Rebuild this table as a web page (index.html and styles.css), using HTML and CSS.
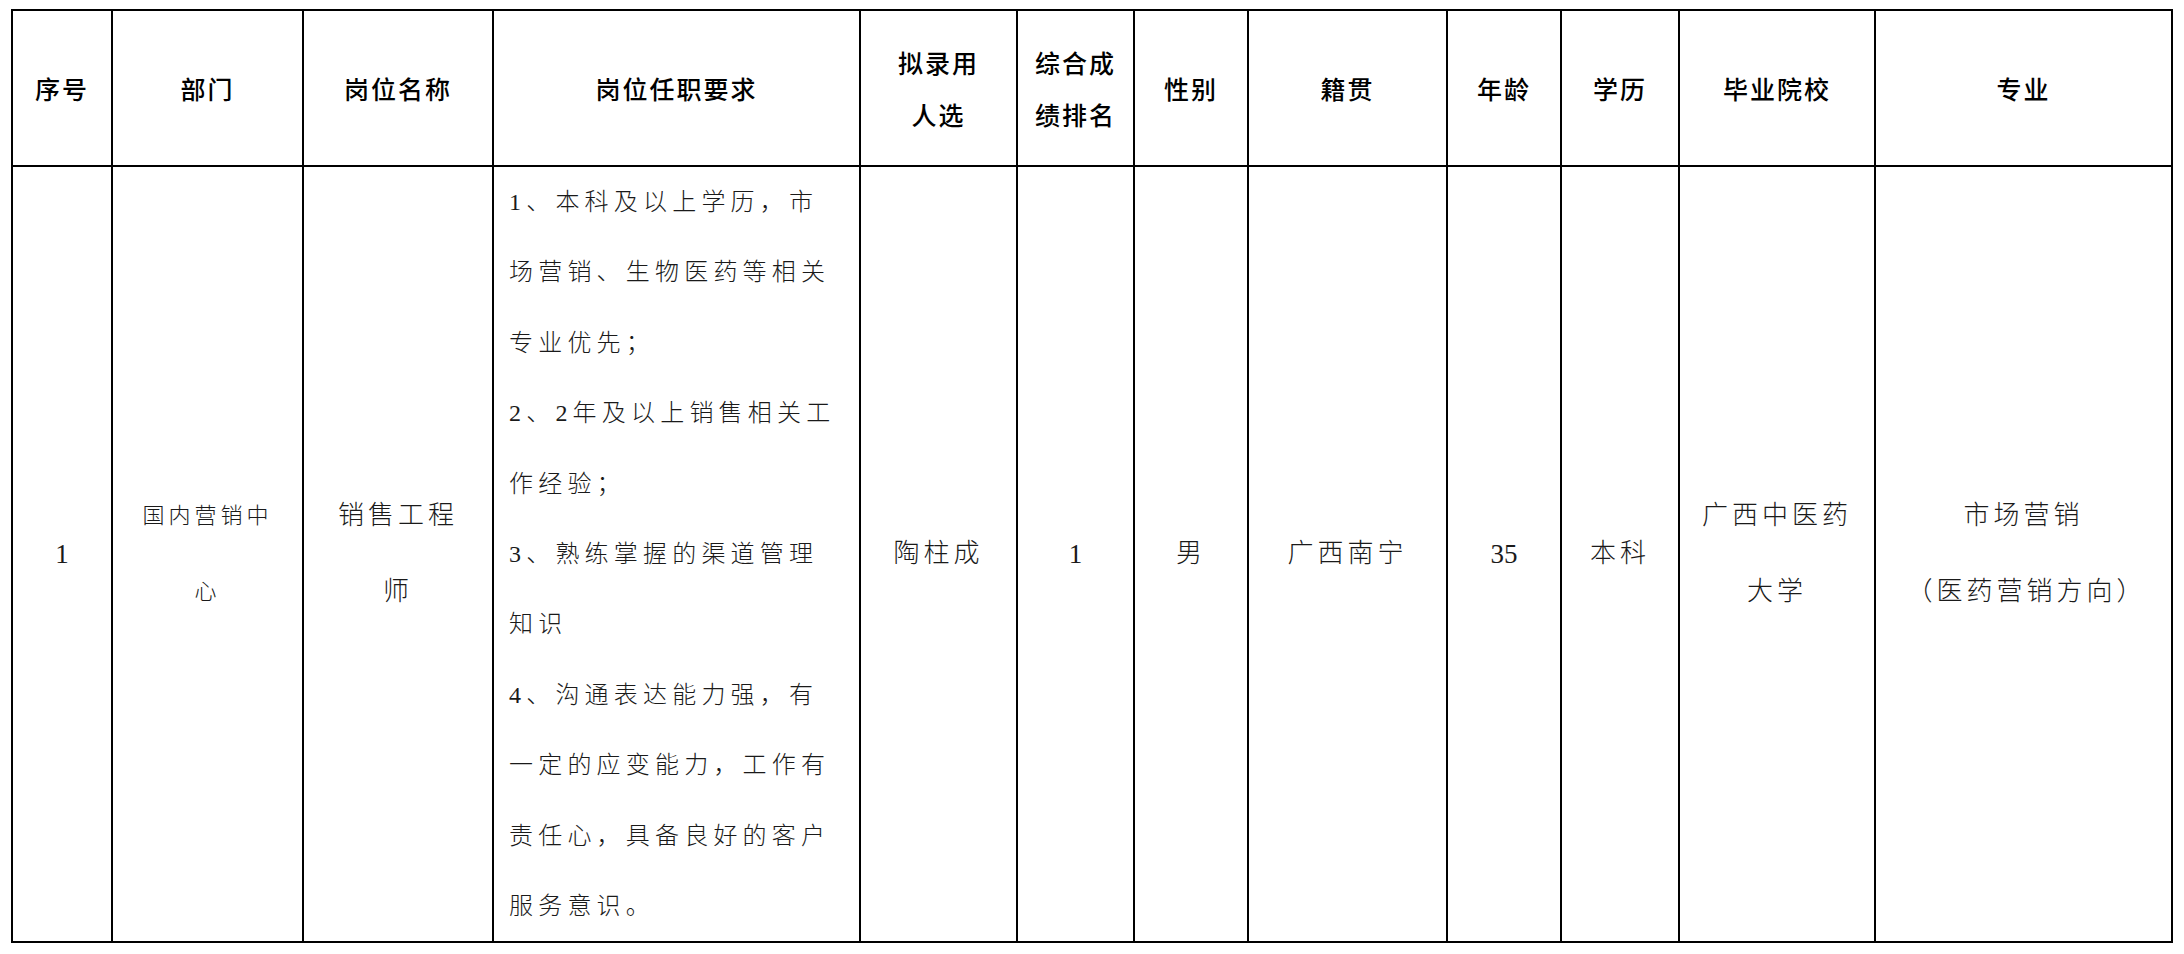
FILE: index.html
```html
<!DOCTYPE html>
<html lang="zh-CN">
<head>
<meta charset="utf-8">
<title>拟录用人选</title>
<link rel="stylesheet" href="styles.css">
</head>
<body>
<table class="grid">
  <colgroup>
    <col class="c1"><col class="c2"><col class="c3"><col class="c4"><col class="c5"><col class="c6">
    <col class="c7"><col class="c8"><col class="c9"><col class="c10"><col class="c11"><col class="c12">
  </colgroup>
  <thead>
    <tr class="head">
      <th>序号</th>
      <th>部门</th>
      <th>岗位名称</th>
      <th>岗位任职要求</th>
      <th class="two">拟录用<br>人选</th>
      <th class="two">综合成<br>绩排名</th>
      <th>性别</th>
      <th>籍贯</th>
      <th>年龄</th>
      <th>学历</th>
      <th>毕业院校</th>
      <th>专业</th>
    </tr>
  </thead>
  <tbody>
    <tr class="row">
      <td class="num">1</td>
      <td class="small two">国内营销中<br>心</td>
      <td class="two">销售工程<br>师</td>
      <td class="req">1、本科及以上学历，市<br>场营销、生物医药等相关<br>专业优先；<br>2、2年及以上销售相关工<br>作经验；<br>3、熟练掌握的渠道管理<br>知识<br>4、沟通表达能力强，有<br>一定的应变能力，工作有<br>责任心，具备良好的客户<br>服务意识。</td>
      <td>陶柱成</td>
      <td class="num">1</td>
      <td>男</td>
      <td>广西南宁</td>
      <td class="num">35</td>
      <td>本科</td>
      <td class="two">广西中医药<br>大学</td>
      <td class="two">市场营销<br><span class="paren">（医药营销方向）</span></td>
    </tr>
  </tbody>
</table>
</body>
</html>
```

FILE: styles.css
```css
html, body {
  margin: 0;
  padding: 0;
  background: #ffffff;
}

body {
  padding: 9px 0 0 11px;
  font-family: "Liberation Serif", "Noto Sans CJK SC", serif;
  color: #111111;
  text-spacing-trim: space-all;
}

.grid {
  border-collapse: collapse;
  table-layout: fixed;
  width: 2160px;
}

.c1 { width: 100px; }
.c2 { width: 191px; }
.c3 { width: 190px; }
.c4 { width: 367px; }
.c5 { width: 157px; }
.c6 { width: 117px; }
.c7 { width: 114px; }
.c8 { width: 199px; }
.c9 { width: 114px; }
.c10 { width: 118px; }
.c11 { width: 196px; }
.c12 { width: 297px; }

.grid th,
.grid td {
  border: 2px solid #000000;
  padding: 0;
  text-align: center;
  vertical-align: middle;
}

.head {
  height: 156px;
}

.head th {
  font-family: "Noto Sans CJK SC", sans-serif;
  font-weight: 500;
  font-size: 25px;
  letter-spacing: 2px;
  line-height: 52px;
  color: #000000;
}

.row {
  height: 776px;
}

.row td {
  font-family: "Liberation Serif", "Noto Sans CJK SC", serif;
  font-weight: 300;
  font-size: 26px;
  letter-spacing: 4px;
  line-height: 76px;
  color: #1a1a1a;
  text-spacing-trim: space-all;
}

.row td.small {
  font-size: 22px;
  letter-spacing: 4px;
}

.row td.num {
  letter-spacing: 0;
  font-size: 27px;
  font-weight: 400;
}

.paren {
  display: inline-block;
  letter-spacing: 4px;
  padding: 0 6px 0 12px;
}

.row td.req {
  text-align: left;
  vertical-align: top;
  padding: 0 0 0 15px;
  font-size: 24px;
  letter-spacing: 5.2px;
  line-height: 70.4px;
}
```
